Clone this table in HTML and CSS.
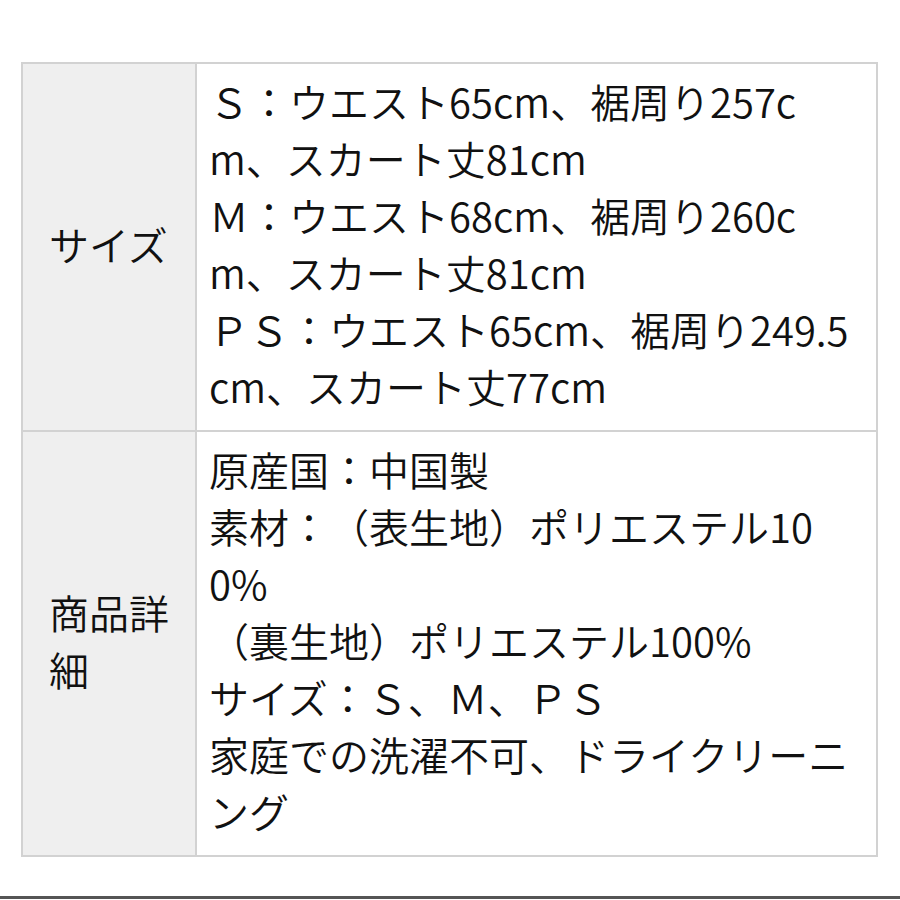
FILE: index.html
```html
<!DOCTYPE html>
<html lang="ja">
<head>
<meta charset="utf-8">
<title>商品詳細</title>
<link rel="stylesheet" href="styles.css">
</head>
<body>
<table class="spec">
  <tbody>
    <tr>
      <th class="label">サイズ</th>
      <td class="value">Ｓ：ウエスト65cm、裾周り257c<br>m、スカート丈81cm<br>Ｍ：ウエスト68cm、裾周り260c<br>m、スカート丈81cm<br>ＰＳ：ウエスト65cm、裾周り249.5<br>cm、スカート丈77cm</td>
    </tr>
    <tr class="next">
      <th class="label">商品詳<br>細</th>
      <td class="value">原産国：中国製<br>素材：（表生地）ポリエステル10<br>0%<br>（裏生地）ポリエステル100%<br>サイズ：Ｓ、Ｍ、ＰＳ<br>家庭での洗濯不可、ドライクリーニ<br>ング</td>
    </tr>
  </tbody>
</table>
<div class="rule"></div>
</body>
</html>
```
FILE: styles.css
```css
html, body {
  background: #ffffff;
}
body {
  margin: 0;
  padding: 62px 22px 0 21px;
  font-family: "Noto Sans CJK JP", "Noto Sans", sans-serif;
  font-weight: 350;
  color: #111111;
  overflow: hidden;
  height: 900px;
  box-sizing: border-box;
  text-spacing-trim: space-all;
}
.spec {
  width: 857px;
  border-collapse: separate;
  border-spacing: 0;
  border: 2px solid #d2d2d2;
  box-sizing: border-box;
}
.label {
  width: 119px;
  padding: 0 26px 5px;
  background: #efefef;
  border-right: 2px solid #d2d2d2;
  font-weight: 350;
  font-size: 40px;
  line-height: 57px;
  text-align: left;
  vertical-align: middle;
  white-space: nowrap;
}
.value {
  padding: 9px 12px 15px;
  font-size: 40px;
  line-height: 57px;
  white-space: nowrap;
  vertical-align: top;
}
.next .label,
.next .value {
  border-top: 2px solid #d2d2d2;
}
.rule {
  margin: 39px -22px 0 -21px;
  border-top: 3px solid #555555;
}
```
